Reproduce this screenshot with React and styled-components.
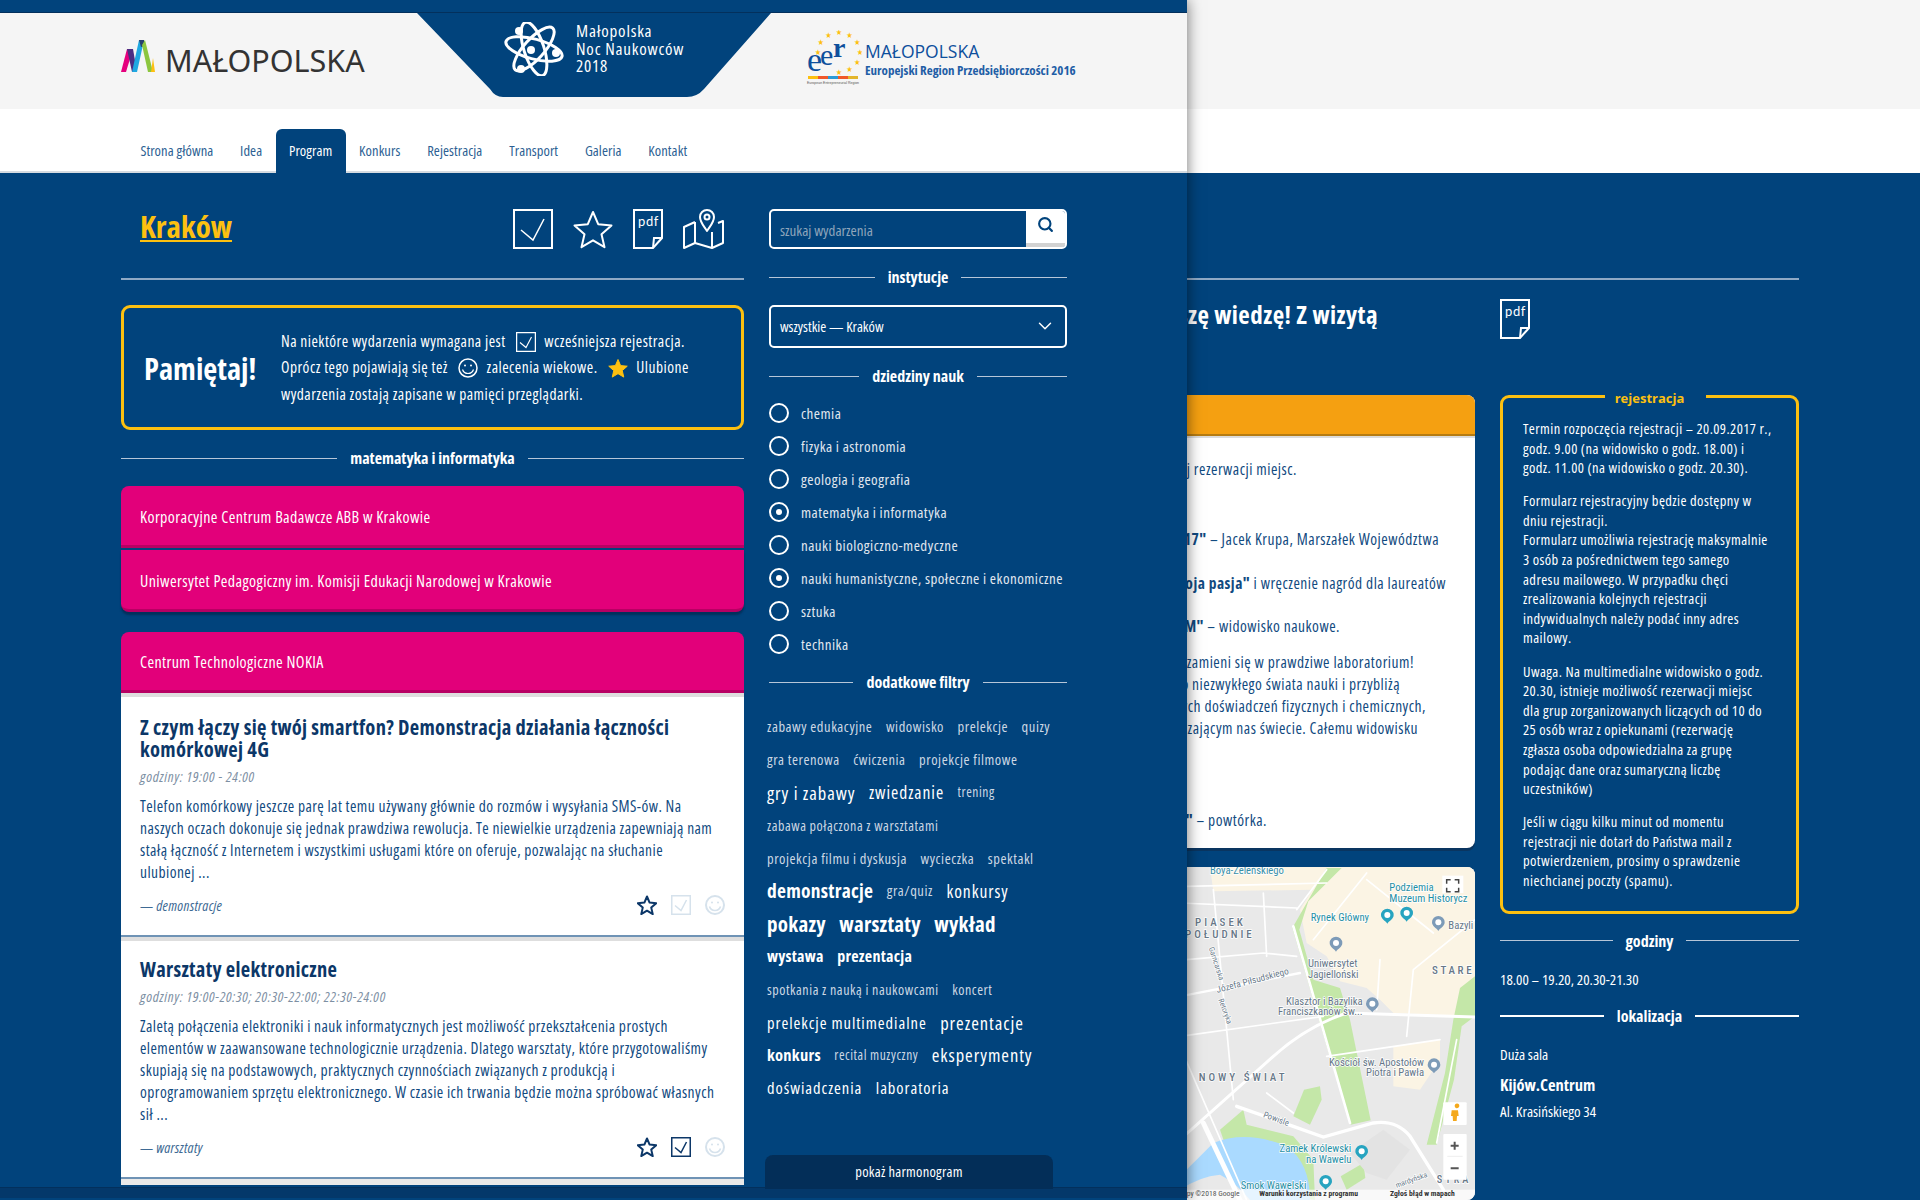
import React from "react";
import styled, { createGlobalStyle } from "styled-components";
import { Search, ChevronDown } from "lucide-react";

const BLUE = "#01437c";
const NAVY = "#0c3768";
const YEL = "#fdc010";
const FONT = '"Open Sans", Lato, sans-serif';

const Global = createGlobalStyle`
  html, body { margin: 0; padding: 0; background: ${BLUE}; }
  * { box-sizing: border-box; }
  body { font-family: ${FONT}; font-stretch: 75%; }
  input, button { font-family: ${FONT}; font-stretch: 75%; }
`;

const Stage = styled.div`
  position: relative; width: 1920px; height: 1200px; overflow: hidden; background: ${BLUE};
`;

/* ---------- page in the background ---------- */
const BackTop = styled.div`height: 109px; background: #f5f5f5;`;
const BackNav = styled.div`height: 64px; background: #fff;`;
const BackBody = styled.div`padding: 105px 121px 0 0;`;
const BackRule = styled.div`height: 2px; background: #8fa9c5;`;
const BackHead = styled.div`
  display: grid; grid-template-columns: 1fr 299px; column-gap: 25px; height: 40px; margin-top: 19px; align-items: center;
`;
const BackTitle = styled.h1`
  margin: 0 0 10px; padding-right: 97px; text-align: right; white-space: nowrap; overflow: hidden;
  color: #fff; font-size: 25px; font-weight: 700; line-height: 30px; letter-spacing: 0.45px;
`;
const BackCols = styled.div`
  display: grid; grid-template-columns: 1fr 299px; column-gap: 25px; margin-top: 56px; align-items: start;
`;
const BackMain = styled.div`display: flex; flex-direction: column; gap: 19px;`;
const InfoCard = styled.article`
  height: 453px; background: #fff; border-radius: 8px; overflow: hidden;
  box-shadow: 0 3px 0 #0a3560; color: ${NAVY};
`;
const OrangeBar = styled.div`
  height: 41px; background: #f5a011; border-bottom: 2px solid #b67c12; box-shadow: 0 2px 0 #dcdcdc;
`;
const InfoLines = styled.div`padding-top: ${(p) => p.$top || 0}px;`;
const InfoLine = styled.p`
  margin: ${(p) => p.$mt || 0}px 0 0; padding-right: ${(p) => p.$pr}px; text-align: right; white-space: nowrap;
  font-size: 15.5px; line-height: 22px; color: #114a80; letter-spacing: 0.5px;
  & b { font-weight: 700; }
`;
const MapBox = styled.div`
  height: 333px; border-radius: 8px; overflow: hidden; background: #e9e9e9; display: flex; justify-content: flex-end;
`;
const Side = styled.aside`color: #fff;`;
const RegBox = styled.fieldset`
  margin: -9px 0 0; padding: 13px 8px 20px 20px; border: 3px solid ${YEL}; border-radius: 9px; min-width: 0;
`;
const RegLegend = styled.legend`
  margin: 0 auto; padding: 0 16px; color: ${YEL}; font-size: 13px; font-weight: 700; line-height: 20px; font-stretch: 100%;
  position: relative; top: 2px; left: -6px;
`;
const RegText = styled.p`
  margin: ${(p) => (p.$first ? 0 : 13.5)}px 0 0; font-size: 14.5px; line-height: 19.6px; white-space: nowrap; letter-spacing: 0.42px;
`;

/* ---------- front panel ---------- */
const Panel = styled.div`
  position: absolute; left: 0; top: 0; width: 1187px; height: 1200px; z-index: 2; background: ${BLUE};
  box-shadow: 0 0 14px rgba(0, 0, 0, 0.55); display: flex; flex-direction: column;
`;
const TopStrip = styled.div`height: 13px; background: ${BLUE}; border-bottom: 1px solid #03305c;`;
const Brand = styled.header`
  height: 96px; background: #f5f5f5; display: flex; padding-left: 121px; align-items: flex-start;
`;
const MLogo = styled.div`
  width: 296px; height: 84px; display: flex; align-items: flex-start; gap: 10px; padding-top: 27px;
`;
const MWord = styled.span`
  font-family: "Noto Sans", sans-serif; font-stretch: 100%; font-size: 30.5px; color: #333; line-height: 36px; margin-top: 2px;
`;
const Night = styled.div`
  position: relative; width: 354px; height: 84px; display: flex; padding-left: 87px; gap: 12px; color: #fff;
  &::before {
    content: ""; position: absolute; inset: 0; background: ${BLUE};
    clip-path: path("M0 0 L354 0 L287 76 Q280 84 270 84 L86 84 Q78 84 73 76 Z");
  }
  & > * { position: relative; }
`;
const NightText = styled.div`
  padding-top: 9px; font-size: 17px; line-height: 17.7px; font-weight: 400; letter-spacing: 0.8px;
`;
const Eer = styled.div`
  display: flex; align-items: flex-start; margin-left: 35px; gap: 3px; padding-top: 17px;
`;
const EerText = styled.div`padding-top: 11px; color: #0d4f9c;`;
const EerTop = styled.div`font-size: 17.5px; line-height: 20px; font-stretch: 100%;`;
const EerSub = styled.div`font-size: 13px; font-weight: 700; line-height: 16px; margin-top: 1px; color: #1f5ea6;`;

const Nav = styled.nav`
  height: 64px; background: #fff; display: flex; padding: 20px 0 0 127px; align-items: stretch; box-shadow: inset 0 -2px 0 #d5dbe1;
`;
const NavItem = styled.a`
  display: flex; align-items: center; padding: 0 13.4px 2px; font-size: 14.5px; letter-spacing: 0.08px; color: ${(p) => (p.$active ? "#fff" : "#2d5f93")};
  background: ${(p) => (p.$active ? BLUE : "transparent")}; border-radius: 6px 6px 0 0;
`;

const Body = styled.div`
  height: 1014px; padding: 36px 120px 0 121px; display: grid; grid-template-columns: 623px 298px; column-gap: 25px;
`;
const FootBand = styled.div`height: 11px; background: #04386a; border-top: 1px solid #03305c;`;
const LeftCol = styled.main`min-width: 0;`;
const RightCol = styled.div`min-width: 0; position: relative; z-index: 1;`;
const ToolRow = styled.div`height: 40px; display: flex; align-items: center; padding-left: 19px;`;
const City = styled.a`
  font-size: 31px; font-weight: 700; color: ${YEL}; text-decoration: underline; text-decoration-thickness: 2px; text-underline-offset: 2px; line-height: 40px; margin-top: -6px;
`;
const Tools = styled.div`margin-left: auto; display: flex; align-items: center; gap: 20px; padding-right: 20px;`;
const Rule = styled.div`height: 2px; background: #8fa9c5; margin-top: 29px;`;
const Remember = styled.section`
  margin-top: 25px; height: 125px; border: 3px solid ${YEL}; border-radius: 9px; display: flex; align-items: center; padding-left: 20px; color: #fff;
`;
const RemTitle = styled.strong`font-size: 30.5px; font-weight: 700; width: 137px; flex: none; line-height: 40px; white-space: nowrap;`;
const RemText = styled.div`font-size: 15.5px; line-height: 26.5px; white-space: nowrap; letter-spacing: 0.47px;`;
const RemIcon = styled.span`
  display: inline-flex; vertical-align: middle; margin: 0 5px 0 7px; position: relative; top: -1px;
`;
const RuleHead = styled.div`
  display: flex; align-items: center; gap: 13px; height: 20px; margin-top: ${(p) => p.$mt ?? 18}px; color: #fff;
  font-size: 16px; font-weight: 700; line-height: 20px; white-space: nowrap;
  &::before, &::after { content: ""; flex: 1; height: ${(p) => (p.$bright ? 2 : 1)}px; background: ${(p) => (p.$bright ? "#fff" : "#b6c6d8")}; }
`;
const Pink = styled.div`
  height: ${(p) => p.$h || 62}px; margin-top: ${(p) => p.$mt ?? 2}px; display: flex; align-items: center; padding: 2px 19px 0;
  background: #e2007a; border-bottom: 3px solid #b80063; color: #fff; font-size: 16px; letter-spacing: 0.4px;
  border-radius: ${(p) => p.$r || "8px 8px 0 0"};
  box-shadow: ${(p) => (p.$shadow ? "0 3px 2px #03305c" : "none")};
`;
const Event = styled.article`
  background: #fff; border-top: 4px solid #dedede; border-bottom: 2px solid #6f93b5; height: ${(p) => p.$h}px; padding: ${(p) => p.$pt}px 19px 0; color: #114a80; position: relative;
  box-shadow: 0 ${(p) => (p.$last ? "6px 0 #e9e9e9" : "0 0 transparent")};
`;
const EvTitle = styled.h2`margin: 0; font-size: 20.5px; font-weight: 700; line-height: 22px; color: ${NAVY}; white-space: nowrap; letter-spacing: 0.3px;`;
const EvHours = styled.div`margin-top: 8px; font-size: 14.5px; font-style: italic; line-height: 18px; color: #7d8fa3; letter-spacing: 0.7px;`;
const EvText = styled.p`margin: 9px 0 0; font-size: 15.5px; line-height: 22px; white-space: nowrap; letter-spacing: 0.44px;`;
const EvFoot = styled.div`display: flex; align-items: center; height: 22px; margin-top: 11px;`;
const EvTag = styled.span`font-size: 14.5px; font-style: italic; color: #3e6a94; letter-spacing: 0.3px;`;
const EvIcons = styled.div`margin-left: auto; display: flex; align-items: center; gap: 14px;`;

const SearchBox = styled.form`
  height: 40px; display: flex; border: 2px solid #fff; border-radius: 5px; overflow: hidden;
`;
const SearchInput = styled.input`
  flex: 1; min-width: 0; border: 0; background: transparent; padding: 1px 0 0 9px; font-size: 15px; outline: none;
  &::placeholder { color: #8fa5bb; opacity: 1; }
`;
const SearchBtn = styled.button`
  width: 39px; border: 0; padding: 0 0 5px; background: #fff; border-bottom: 4px solid #d2d2d2; color: ${BLUE}; display: flex; align-items: center; justify-content: center;
`;
const Picker = styled.div`
  margin-top: 18px; height: 43px; border: 2px solid #fff; border-radius: 5px; display: flex; align-items: center; justify-content: space-between;
  padding: 0 9px 1px; color: #fff; font-size: 14.5px;
`;
const Radios = styled.ul`margin: 10.5px 0 0; padding: 0; list-style: none;`;
const RadioRow = styled.li`
  height: 33px; display: flex; align-items: center; gap: 12px; color: #e1e8f0; font-size: 15px; white-space: nowrap; letter-spacing: 0.47px;
`;
const RadioDot = styled.span`
  width: 20px; height: 20px; flex: none; border-radius: 50%; border: 2px solid #fff; display: flex; align-items: center; justify-content: center;
  &::after { content: ""; width: 6px; height: 6px; border-radius: 50%; background: ${(p) => (p.$on ? "#fff" : "transparent")}; }
`;
const Tags = styled.div`margin: 18.5px 0 0 -2px;`;
const TagRow = styled.div`height: 32.8px; display: flex; align-items: center; gap: 13.5px; white-space: nowrap;`;
const SPACING = { 400: 0.55, 500: 0.95, 700: 0.25 };
const Tag = styled.span`
  font-size: ${(p) => p.$s}px; font-weight: ${(p) => p.$w || 400}; letter-spacing: ${(p) => SPACING[p.$w || 400]}px; color: ${(p) => (p.$s > 15 ? "#fff" : "#cdd8e4")};
`;
const ShowBtn = styled.button`
  display: block; margin: 50.5px 0 0 -4px; width: 288px; height: 34px; border: 0; border-radius: 8px 8px 0 0; background: #032e58; color: #fff; font-size: 14.5px; letter-spacing: 0.25px; padding: 0;
`;
const SideLine = styled.div`
  margin-top: ${(p) => p.$mt}px; font-size: ${(p) => (p.$bold ? 16.5 : 15)}px; font-weight: ${(p) => (p.$bold ? 700 : 400)}; line-height: 20px;
`;

/* ---------- drawings ---------- */
const CheckIcon = ({ s = 40, c = "#fff", w = 2 }) => (
  <svg width={s} height={s} viewBox="0 0 40 40" fill="none">
    <rect x="1" y="1" width="38" height="38" stroke={c} strokeWidth={w * (40 / s)} />
    <path d="M8 21l12 10 11-21" stroke={c} strokeWidth={w * (30 / s)} />
  </svg>
);
const StarIcon = ({ s = 40, c = "#fff", fill = "none", w = 2 }) => (
  <svg width={s} height={s} viewBox="0 0 40 40" fill={fill}>
    <path d="M20 3l5.2 12.2 13.3 1.2-10 8.8 3 13-11.5-6.9L8.500 38.200l3-13-10-8.800 13.300-1.200z" stroke={c} strokeWidth={w * (40 / s)} strokeLinejoin="round" />
  </svg>
);
const SmileIcon = ({ s = 20, c = "#fff", w = 2 }) => (
  <svg width={s} height={s} viewBox="0 0 20 20" fill="none">
    <circle cx="10" cy="10" r="9" stroke={c} strokeWidth={w * (20 / s)} />
    <circle cx="7" cy="7.500" r="1" fill={c} />
    <circle cx="13" cy="7.500" r="1" fill={c} />
    <path d="M4.500 11.500c1 3 3 4 5.500 4s4.500-1 5.500-4" stroke={c} strokeWidth={w * (20 / s) * 0.8} />
  </svg>
);
const PdfIcon = () => (
  <svg width="30" height="40" viewBox="0 0 30 40" fill="none">
    <path d="M1 1h28v28L20 39H1z" stroke="#fff" strokeWidth="2" />
    <path d="M29 29h-8l-1 10" stroke="#fff" strokeWidth="2" />
    <text x="5" y="17" fill="#fff" fontSize="13" fontFamily="Lato, sans-serif" letterSpacing=".6">pdf</text>
  </svg>
);
const MapIcon = () => (
  <svg width="41" height="40" viewBox="0 0 41 40" fill="none" stroke="#fff" strokeWidth="2" strokeLinejoin="round">
    <path d="M12 13L1 18v21l11-5 17 5 11-5V12l-5 2" />
    <path d="M12 13v21M29 23v16" />
    <path d="M24 22c-4-6-7-9-7-14a7 7 0 0 1 14 0c0 5-3 8-7 14z" fill="#01437c" />
    <circle cx="24" cy="8" r="2.500" />
  </svg>
);
const MarkLogo = () => (
  <svg width="34" height="32" viewBox="0 0 34 32">
    <polygon points="0,32 6,9 12,9 5,32" fill="#e5007d" />
    <polygon points="6,9 12,9 16,32 11,32" fill="#4b2e83" />
    <polygon points="11,32 18,0 23,0 16,32" fill="#1fa8e1" />
    <polygon points="18,0 23,0 24,6 20,7" fill="#27406f" />
    <polygon points="21,5 24,0 32,32 27,32" fill="#8cc63f" />
    <polygon points="30,32 32,18 34,32" fill="#fdc010" />
  </svg>
);
const Atom = () => (
  <svg width="60" height="54" viewBox="0 0 60 54" fill="none" stroke="#fff" strokeWidth="3" style={{ marginTop: 9 }}>
    <ellipse cx="30" cy="27" rx="29" ry="10" transform="rotate(15 30 27)" />
    <ellipse cx="30" cy="27" rx="28" ry="10" transform="rotate(72 30 27)" />
    <ellipse cx="30" cy="27" rx="28" ry="10" transform="rotate(-48 30 27)" />
    <circle cx="27" cy="28" r="4" fill="#fff" stroke="none" />
    <circle cx="15" cy="9" r="4" fill="#fff" stroke="none" />
    <circle cx="52" cy="31" r="4" fill="#fff" stroke="none" />
    <circle cx="17" cy="47" r="4" fill="#fff" stroke="none" />
  </svg>
);
const EerMark = () => {
  const stars = Array.from({ length: 12 }, (_, i) => i * 30);
  return (
    <svg width="56" height="56" viewBox="0 0 56 56">
      {stars.map((a) => {
        if (a > 190 && a < 260) return null;
        const r = (a * Math.PI) / 180;
        return (
          <text key={a} x={33 + 21 * Math.sin(r)} y={25 - 20 * Math.cos(r)} fontSize="8" fill="#fdc010" textAnchor="middle" fontFamily="DejaVu Sans">★</text>
        );
      })}
      <text x="1" y="41" fontSize="34" fill="#0d4f9c" fontFamily="Liberation Serif">e</text>
      <text x="14" y="35" fontSize="30" fill="#0d4f9c" fontFamily="Liberation Serif">e</text>
      <text x="27" y="27" fontSize="28" fill="#0d4f9c" fontWeight="700" fontFamily="Liberation Serif">r</text>
      <rect x="2" y="46" width="10" height="3" fill="#fdc010" />
      <rect x="12" y="46" width="10" height="3" fill="#f0582a" />
      <rect x="22" y="46" width="10" height="3" fill="#2a9ad6" />
      <rect x="32" y="46" width="10" height="3" fill="#f0582a" />
      <rect x="42" y="46" width="10" height="3" fill="#e3b52c" />
      <text x="27" y="54" fontSize="3.500" fill="#555" textAnchor="middle" fontFamily="Liberation Sans">European Entrepreneurial Region</text>
    </svg>
  );
};

const Pin = ({ x, y, c }) => (
  <g>
    <path d={`M${x} ${y + 26}c-6-9-19-14-19-26a19 19 0 0 1 38 0c0 12-13 17-19 26z`} fill={c} />
    <circle cx={x} cy={y} r="9" fill="#fff" />
  </g>
);
const MapLabel = ({ x, y, c = "#6a7a8a", s = 32, sp = 0, w = 400, a = "start", r, children }) => (
  <text x={x} y={y} fill={c} fontSize={s} letterSpacing={sp} fontWeight={w} textAnchor={a} fontFamily="Roboto, sans-serif"
    stroke="#fff" strokeWidth="4" paintOrder="stroke" transform={r ? `rotate(${r} ${x} ${y})` : undefined}>{children}</text>
);
const MapDrawing = () => (
  <svg width="295" height="333" viewBox="0 22 885 999" style={{ flex: "none" }}>
    <rect x="0" y="0" width="885" height="1021" fill="#e9e9e9" />
    <polygon points="440,22 885,22 885,470 640,460 600,420 560,385 480,365 440,290 380,250 360,150" fill="#fbf4e4" />
    <polygon points="640,560 780,540 780,600 720,690 640,680" fill="#fbf4e4" />
    <polygon points="90,22 440,22 400,90 100,95" fill="#fbf4e4" />
    <polygon points="440,25 485,25 385,125 358,210 400,360 480,385 510,480 572,782 512,795 440,560 385,370 337,205" fill="#c4e7a8" />
    <polygon points="885,350 840,385 820,480 795,640 740,855 770,855 822,660 845,500 885,470" fill="#c4e7a8" />
    <polygon points="120,810 190,750 200,795 340,830 400,900 405,1021 180,985" fill="#c4e7a8" />
    <polygon points="340,770 372,690 420,680 425,720 390,795" fill="#c4e7a8" />
    <polygon points="482,950 550,910 556,955 500,990" fill="#c4e7a8" />
    <path d="M0 950 L100 850 Q200 810 320 860 Q390 910 390 1021 L210 1021 Q170 970 120 945 Q60 950 0 990 Z" fill="#aadaff" />
    <path d="M510 880 L610 810 L690 870 L620 960 L560 940Z" fill="#e3e3e3" />
    <g fill="none" stroke="#fff" strokeLinecap="round">
      <path strokeWidth="9" d="M0 840L280 590Q380 500 500 460L885 472" />
      <path strokeWidth="10" d="M170 740L430 832L580 790Q650 780 690 830L790 990" />
      <path strokeWidth="15" d="M70 790L180 1021" />
      <path strokeWidth="8" d="M340 200L510 790" />
      <path strokeWidth="7" d="M0 410L360 340" />
      <path strokeWidth="5" d="M0 130L350 145M20 300L250 280L350 290M0 530L430 470M100 90L160 720M250 100L260 290M20 80L440 70M350 150L440 30" />
      <path strokeWidth="5" d="M440 590L780 540M830 540L770 850M560 40L400 240M560 60L760 220M885 180L700 330L680 530M600 300L590 450M0 560L200 1021M260 700L340 760" />
    </g>
    <MapLabel x="90" y="42" c="#3a8fa8">Boya-Żeleńskiego</MapLabel>
    <MapLabel x="45" y="198" s="33" sp="9" w="500" c="#687888">PIASEK</MapLabel>
    <MapLabel x="15" y="236" s="33" sp="9" w="500" c="#687888">POŁUDNIE</MapLabel>
    <MapLabel x="392" y="185" c="#1f8fa5">Rynek Główny</MapLabel>
    <MapLabel x="628" y="95" c="#1f8fa5">Podziemia</MapLabel>
    <MapLabel x="628" y="127" c="#1f8fa5">Muzeum Historycz</MapLabel>
    <MapLabel x="384" y="322" c="#667788">Uniwersytet</MapLabel>
    <MapLabel x="384" y="354" c="#667788">Jagielloński</MapLabel>
    <MapLabel x="805" y="207" c="#667788">Bazyli</MapLabel>
    <MapLabel x="756" y="342" s="33" sp="8" w="500" c="#687888">STARE</MapLabel>
    <MapLabel x="112" y="400" s="28" r="-15">Józefa Piłsudskiego</MapLabel>
    <MapLabel x="86" y="265" s="23" r="72">Garncarska</MapLabel>
    <MapLabel x="115" y="420" s="23" r="70">Retoryka</MapLabel>
    <MapLabel x="548" y="435" a="end" c="#667788">Klasztor i Bazylika</MapLabel>
    <MapLabel x="548" y="466" a="end" c="#667788">Franciszkanów św...</MapLabel>
    <MapLabel x="732" y="618" a="end" c="#667788">Kościół św. Apostołów</MapLabel>
    <MapLabel x="732" y="650" a="end" c="#667788">Piotra i Pawła</MapLabel>
    <MapLabel x="56" y="664" s="33" sp="9" w="500" c="#687888">NOWY ŚWIAT</MapLabel>
    <MapLabel x="248" y="772" s="26" r="20">Powiśle</MapLabel>
    <MapLabel x="514" y="877" a="end" c="#1f8fa5">Zamek Królewski</MapLabel>
    <MapLabel x="514" y="909" a="end" c="#1f8fa5">na Wawelu</MapLabel>
    <MapLabel x="182" y="987" c="#1f8fa5">Smok Wawelski</MapLabel>
    <MapLabel x="650" y="985" s="23" r="-20">mardyńska</MapLabel>
    <MapLabel x="770" y="970" s="31" sp="9" w="500" c="#687888">STRA</MapLabel>
    <Pin x={622} y={166} c="#27a4c0" />
    <Pin x={680} y={160} c="#27a4c0" />
    <Pin x={775} y={188} c="#7d9bb8" />
    <Pin x={468} y={250} c="#7d9bb8" />
    <Pin x={577} y={432} c="#7d9bb8" />
    <Pin x={762} y={615} c="#7d9bb8" />
    <Pin x={545} y={875} c="#27a4c0" />
    <Pin x={437} y={965} c="#27a4c0" />
    <rect x="787" y="48" width="63" height="52" fill="#fff" />
    <path d="M800 72v-12h12M824 60h12v12M836 84v12h-12M812 96h-12v-12" stroke="#444" strokeWidth="4.500" fill="none" />
    <rect x="790" y="728" width="70" height="68" rx="3" fill="#fff" />
    <path d="M824 738a7 7 0 1 1 0 1zM815 752h19l2 17h-5l-1 15h-11l-1-15h-5z" fill="#f4a81c" />
    <rect x="790" y="823" width="70" height="137" rx="3" fill="#fff" />
    <path d="M824 846v24M812 858h24M812 926h24" stroke="#555" strokeWidth="6" />
    <path d="M802 890h46" stroke="#e6e6e6" strokeWidth="2" />
    <rect x="0" y="990" width="885" height="31" fill="#fff" fillOpacity=".7" />
    <text x="20" y="1010" fontSize="23" fill="#555" fontFamily="Roboto, sans-serif">py ©2018 Google</text>
    <text x="238" y="1010" fontSize="23" fill="#333" fontWeight="700" fontFamily="Roboto, sans-serif">Warunki korzystania z programu</text>
    <text x="630" y="1010" fontSize="23" fill="#333" fontWeight="700" fontFamily="Roboto, sans-serif">Zgłoś błąd w mapach</text>
  </svg>
);

const NAV = ["Strona główna", "Idea", "Program", "Konkurs", "Rejestracja", "Transport", "Galeria", "Kontakt"];
const FIELDS = [
  ["chemia"], ["fizyka i astronomia"], ["geologia i geografia"], ["matematyka i informatyka", 1],
  ["nauki biologiczno-medyczne"], ["nauki humanistyczne, społeczne i ekonomiczne", 1], ["sztuka"], ["technika"],
];
const TAGS = [
  [["zabawy edukacyjne", 14.5], ["widowisko", 14.5], ["prelekcje", 14.5], ["quizy", 14.5]],
  [["gra terenowa", 14.5], ["ćwiczenia", 14.5], ["projekcje filmowe", 14.5]],
  [["gry i zabawy", 18.5, 500], ["zwiedzanie", 17.5, 500], ["trening", 13.5]],
  [["zabawa połączona z warsztatami", 14]],
  [["projekcja filmu i dyskusja", 14.5], ["wycieczka", 14.5], ["spektakl", 14.5]],
  [["demonstracje", 19.5, 700], ["gra/quiz", 14.5], ["konkursy", 17.5, 500]],
  [["pokazy", 21, 700], ["warsztaty", 21, 700], ["wykład", 21, 700]],
  [["wystawa", 16, 700], ["prezentacja", 16, 700]],
  [["spotkania z nauką i naukowcami", 14], ["koncert", 14]],
  [["prelekcje multimedialne", 16.5, 500], ["prezentacje", 18.5, 500]],
  [["konkurs", 16.500, 700], ["recital muzyczny", 13.5], ["eksperymenty", 18.5, 500]],
  [["doświadczenia", 16.5, 500], ["laboratoria", 16.5, 500]],
];
const PALE = "#d6e2ec";

export default function App() {
  return (
    <Stage>
      <Global />
      <BackTop />
      <BackNav />
      <BackBody>
        <BackRule />
        <BackHead>
          <BackTitle>Poszerzmy razem naszę wiedzę! Z wizytą</BackTitle>
          <PdfIcon />
        </BackHead>
        <BackCols>
          <BackMain>
            <InfoCard>
              <OrangeBar />
              <InfoLines $top={22}>
                <InfoLine $pr={178}>Obowiązuje system wcześniejszej rezerwacji miejsc.</InfoLine>
                <InfoLine $pr={36} $mt={48}><b>„Małopolska Noc Naukowców 2017"</b> – Jacek Krupa, Marszałek Województwa</InfoLine>
                <InfoLine $pr={29} $mt={22}><b>Konkurs „Nauka to moja pasja"</b> i wręczenie nagród dla laureatów</InfoLine>
                <InfoLine $pr={135} $mt={21}><b>„LABORATORIUM"</b> – widowisko naukowe.</InfoLine>
                <InfoLine $pr={61} $mt={14}>Scena zamieni się w prawdziwe laboratorium!</InfoLine>
                <InfoLine $pr={75}>Prowadzący wprowadzą do niezwykłego świata nauki i przybliżą</InfoLine>
                <InfoLine $pr={49}>szereg spektakularnych doświadczeń fizycznych i chemicznych,</InfoLine>
                <InfoLine $pr={57}>o otaczającym nas świecie. Całemu widowisku</InfoLine>
                <InfoLine $pr={208} $mt={70}><b>„Laboratorium"</b> – powtórka.</InfoLine>
              </InfoLines>
            </InfoCard>
            <MapBox><MapDrawing /></MapBox>
          </BackMain>
          <Side>
            <RegBox>
              <RegLegend>rejestracja</RegLegend>
              <RegText $first>Termin rozpoczęcia rejestracji – 20.09.2017 r.,<br />godz. 9.00 (na widowisko o godz. 18.00) i<br />godz. 11.00 (na widowisko o godz. 20.30).</RegText>
              <RegText>Formularz rejestracyjny będzie dostępny w<br />dniu rejestracji.<br />Formularz umożliwia rejestrację maksymalnie<br />3 osób za pośrednictwem tego samego<br />adresu mailowego. W przypadku chęci<br />zrealizowania kolejnych rejestracji<br />indywidualnych należy podać inny adres<br />mailowy.</RegText>
              <RegText>Uwaga. Na multimedialne widowisko o godz.<br />20.30, istnieje możliwość rezerwacji miejsc<br />dla grup zorganizowanych liczących od 10 do<br />25 osób wraz z opiekunami (rezerwację<br />zgłasza osoba odpowiedzialna za grupę<br />podając dane oraz sumaryczną liczbę<br />uczestników)</RegText>
              <RegText>Jeśli w ciągu kilku minut od momentu<br />rejestracji nie dotarł do Państwa mail z<br />potwierdzeniem, prosimy o sprawdzenie<br />niechcianej poczty (spamu).</RegText>
            </RegBox>
            <RuleHead $mt={17}>godziny</RuleHead>
            <SideLine $mt={18}>18.00 – 19.20, 20.30-21.30</SideLine>
            <RuleHead $mt={17} $bright>lokalizacja</RuleHead>
            <SideLine $mt={18}>Duża sala</SideLine>
            <SideLine $mt={11} $bold>Kijów.Centrum</SideLine>
            <SideLine $mt={6}>Al. Krasińskiego 34</SideLine>
          </Side>
        </BackCols>
      </BackBody>

      <Panel>
        <TopStrip />
        <Brand>
          <MLogo><MarkLogo /><MWord>MAŁOPOLSKA</MWord></MLogo>
          <Night>
            <Atom />
            <NightText>Małopolska<br />Noc Naukowców<br />2018</NightText>
          </Night>
          <Eer>
            <EerMark />
            <EerText>
              <EerTop>MAŁOPOLSKA</EerTop>
              <EerSub>Europejski Region Przedsiębiorczości 2016</EerSub>
            </EerText>
          </Eer>
        </Brand>
        <Nav>
          {NAV.map((n) => <NavItem key={n} $active={n === "Program"}>{n}</NavItem>)}
        </Nav>
        <Body>
          <LeftCol>
            <ToolRow>
              <City>Kraków</City>
              <Tools>
                <CheckIcon />
                <StarIcon />
                <PdfIcon />
                <MapIcon />
              </Tools>
            </ToolRow>
            <Rule />
            <Remember>
              <RemTitle>Pamiętaj!</RemTitle>
              <RemText>
                Na niektóre wydarzenia wymagana jest <RemIcon><CheckIcon s={20} w={1.5} /></RemIcon> wcześniejsza rejestracja.<br />
                Oprócz tego pojawiają się też <RemIcon><SmileIcon s={20} w={1.5} /></RemIcon> zalecenia wiekowe. <RemIcon><StarIcon s={20} c={YEL} fill={YEL} w={1} /></RemIcon> Ulubione<br />
                wydarzenia zostają zapisane w pamięci przeglądarki.
              </RemText>
            </Remember>
            <RuleHead>matematyka i informatyka</RuleHead>
            <Pink $mt={18}>Korporacyjne Centrum Badawcze ABB w Krakowie</Pink>
            <Pink $r="0 0 8px 8px" $shadow>Uniwersytet Pedagogiczny im. Komisji Edukacji Narodowej w Krakowie</Pink>
            <Pink $mt={20} $h={61}>Centrum Technologiczne NOKIA</Pink>
            <Event $h={244} $pt={19}>
              <EvTitle>Z czym łączy się twój smartfon? Demonstracja działania łączności<br />komórkowej 4G</EvTitle>
              <EvHours>godziny: 19:00 - 24:00</EvHours>
              <EvText>Telefon komórkowy jeszcze parę lat temu używany głównie do rozmów i wysyłania SMS-ów. Na<br />naszych oczach dokonuje się jednak prawdziwa rewolucja. Te niewielkie urządzenia zapewniają nam<br />stałą łączność z Internetem i wszystkimi usługami które on oferuje, pozwalając na słuchanie<br />ulubionej ...</EvText>
              <EvFoot>
                <EvTag>— demonstracje</EvTag>
                <EvIcons>
                  <StarIcon s={20} c={NAVY} />
                  <CheckIcon s={20} c={PALE} />
                  <SmileIcon s={20} c={PALE} />
                </EvIcons>
              </EvFoot>
            </Event>
            <Event $h={242} $pt={17} $last>
              <EvTitle>Warsztaty elektroniczne</EvTitle>
              <EvHours>godziny: 19:00-20:30; 20:30-22:00; 22:30-24:00</EvHours>
              <EvText>Zaletą połączenia elektroniki i nauk informatycznych jest możliwość przekształcenia prostych<br />elementów w zaawansowane technologicznie urządzenia. Dlatego warsztaty, które przygotowaliśmy<br />skupiają się na podstawowych, praktycznych czynnościach związanych z produkcją i<br />oprogramowaniem sprzętu elektronicznego. W czasie ich trwania będzie można spróbować własnych<br />sił ...</EvText>
              <EvFoot>
                <EvTag>— warsztaty</EvTag>
                <EvIcons>
                  <StarIcon s={20} c={NAVY} />
                  <CheckIcon s={20} c={NAVY} />
                  <SmileIcon s={20} c={PALE} />
                </EvIcons>
              </EvFoot>
            </Event>
          </LeftCol>
          <RightCol>
            <SearchBox>
              <SearchInput placeholder="szukaj wydarzenia" />
              <SearchBtn type="button"><Search size={17} strokeWidth={3} /></SearchBtn>
            </SearchBox>
            <RuleHead>instytucje</RuleHead>
            <Picker>wszystkie — Kraków<ChevronDown size={22} strokeWidth={1.6} /></Picker>
            <RuleHead>dziedziny nauk</RuleHead>
            <Radios>
              {FIELDS.map(([t, on]) => (
                <RadioRow key={t}><RadioDot $on={on} />{t}</RadioRow>
              ))}
            </Radios>
            <RuleHead $mt={11.5}>dodatkowe filtry</RuleHead>
            <Tags>
              {TAGS.map((row, i) => (
                <TagRow key={i}>
                  {row.map(([t, s, w]) => <Tag key={t} $s={s} $w={w}>{t}</Tag>)}
                </TagRow>
              ))}
            </Tags>
            <ShowBtn>pokaż harmonogram</ShowBtn>
          </RightCol>
        </Body>
        <FootBand />
      </Panel>
    </Stage>
  );
}
